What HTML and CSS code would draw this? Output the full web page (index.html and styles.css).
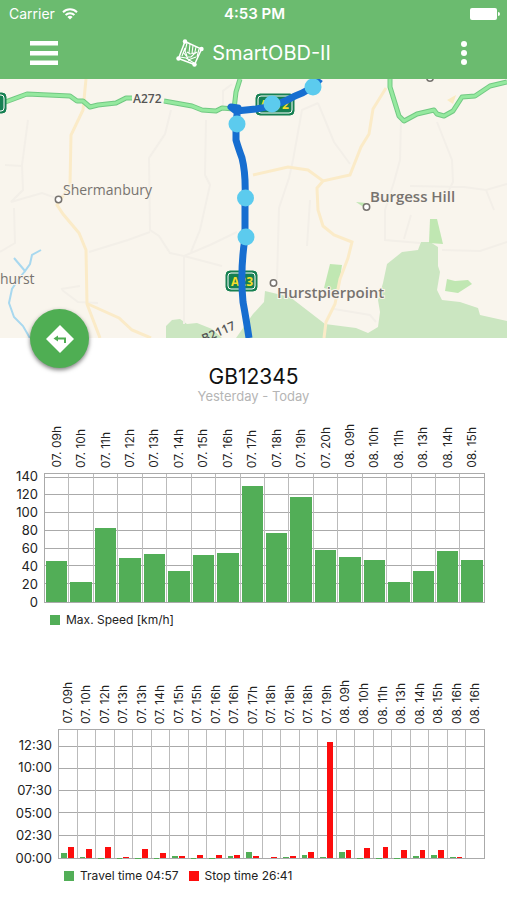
FILE: index.html
```html
<!DOCTYPE html>
<html lang="en">
<head>
  <meta charset="UTF-8">
  <meta name="viewport" content="width=device-width, initial-scale=1.0">
  <title>SmartOBD-II</title>
  <link rel="stylesheet" href="styles.css">
</head>
<body>
  <header class="header">
    <div class="status">
      <div class="carrier">
        <span>Carrier</span>
        <svg width="16" height="12" viewBox="0 0 16 12" fill="none" stroke="#fff" stroke-width="2">
          <path d="M1 4.2a10 10 0 0 1 14 0M3.6 7a6.3 6.3 0 0 1 8.8 0"/>
          <path d="M8 11.6L5.4 9a3.8 3.8 0 0 1 5.2 0z" fill="#fff" stroke="none"/>
        </svg>
      </div>
      <strong class="clock">4:53 PM</strong>
      <div class="battery">
        <svg width="30" height="12" viewBox="0 0 30 12" fill="#fff">
          <rect width="27" height="12" rx="2"/>
          <path d="M28 4q2 0 2 2t-2 2z"/>
        </svg>
      </div>
    </div>
    <div class="toolbar">
      <button class="icon-button" aria-label="Menu">
        <svg width="28" height="24" viewBox="0 0 28 24" fill="#fff">
          <path d="M0 0h28v4.5H0zM0 10h28v4.5H0zM0 19.500h28V24H0z"/>
        </svg>
      </button>
      <h1 class="title">
        <svg width="28" height="28" viewBox="0 0 28 28" fill="none" stroke="#fff">
          <path d="M9 2.500L25.500 10L18.500 25.500L2.500 19.500z" stroke-width="1.500"/>
          <path d="M11 4L9 12l2 5M14 5l-1 9M17 6.500l-1 8M20 8l-1.500 7M23 10l-2 8M9 9l-3 8M7 13l4 5h4l3-3 3-2M11 13l3 2 4-1M4 18l6 1 8 5M11 18l2 4M12 21l8-3" stroke-width="1.100"/>
          <g fill="#fff" stroke="none"><circle cx="9" cy="2.500" r="2.200"/><circle cx="25.500" cy="10" r="2.200"/><circle cx="18.500" cy="25.500" r="2.200"/><circle cx="2.500" cy="19.500" r="2.200"/></g>
        </svg>
        <span>SmartOBD-II</span>
      </h1>
      <button class="icon-button more" aria-label="More">
        <svg width="6" height="24" viewBox="0 0 6 24" fill="#fff">
          <circle cx="3" cy="3" r="3"/><circle cx="3" cy="12" r="3"/><circle cx="3" cy="21" r="3"/>
        </svg>
      </button>
    </div>
  </header>

  <section class="map">
    <svg class="map-canvas" viewBox="0 79 507 259" preserveAspectRatio="xMidYMid slice">
      <rect y="79" width="507" height="259" fill="#f9f5ed"/>

      <!-- woods -->
      <g fill="#cbe6c1">
        <path d="M166 338V326L172 320L180 319L187 324L197 323L212 329L222 338z"/>
        <path d="M236 338L253 314L264 302L265 291L290 297L325 324L356 328L368 333L378 327L380 312L378 300L383 283L387 264L402 252L418 250L421 242L430 242L438 247L438 266L440 272L437 290L442 300L460 302L478 308L480 315L507 321V338z"/>
      </g>
      <g fill="#c0e7b2">
        <path d="M430 219L437 219L443 244L429 243z"/>
        <path d="M330 264L342 265L338 292L324 288z"/>
        <path d="M447 279L455 281L468 280L472 284L458 293L445 291z"/>
        <path d="M356 202L366 203L365 208z"/>
      </g>

      <!-- lanes -->
      <g fill="none" stroke="#f3efe8" stroke-width="2">
        <path d="M28 120L22 165L23 190L11 202L42 193L56 198M5 165L22 166"/>
        <path d="M171 110L165 134L149 158L150 230L159 236L170 253L184 256L184 324M89 252L128 240L150 232M184 256L210 245L237 232M184 256L222 266M206 120L205 175L210 185L200 230L191 252M223 110V91L232 84"/>
        <path d="M318 103L302 110L293 160L289 178L279 208L277 280M318 103L334 142L350 164M401 120L400 160L394 182L385 210L385 240L420 243M437 122L452 160L453 182L449 190M410 186L464 187L486 190L507 184M486 190L494 210M442 250L480 251L507 242M404 239L411 215"/>
        <path d="M61 289L80 286M62 290L78 302L98 303M14 208L15 243L0 252M334 309L370 315L376 322M310 200L307 246"/>
      </g>

      <!-- minor roads -->
      <g fill="none" stroke="#fbebc8" stroke-width="3">
        <path d="M86 79L83 110L71 135L70 185L57 205L63 214L79 233L86 250L87 304L100 338M88 304L119 318L132 330L151 338"/>
        <path d="M253 175L288 167L308 170L323 181L350 175L361 147L369 134L373 109L386 88M323 181L317 188L318 210L323 226L334 235L352 242L348 258L340 279L335 304L326 322L324 338"/>
      </g>
      <path d="M447 100L456 95L453 104z" fill="#fbebc2"/>

      <!-- stream -->
      <path d="M41 250L32 255L30 264L25 271L14 258M25 271L18 280L12 289L9 303L14 317L23 326L31 340" fill="none" stroke="#a8d8ef" stroke-width="2"/>

      <!-- A roads -->
      <g fill="none" stroke-linejoin="round">
        <g stroke="#72c983" stroke-width="5">
          <path d="M0 104L27 94L70 96L77 101L83 101L90 107L98 105L116 103L126 98L132 98M164 101L192 106L202 110L216 111L222 108L234 109L236 92L240 79"/>
          <path d="M390 79V87L399 116L404 121L417 114L434 110L437 114L444 116L453 111L462 97L475 96L490 86L507 82"/>
        </g>
        <g stroke="#95e99f" stroke-width="3">
          <path d="M0 104L27 94L70 96L77 101L83 101L90 107L98 105L116 103L126 98L132 98M164 101L192 106L202 110L216 111L222 108L234 109L236 92L240 79"/>
          <path d="M390 79V87L399 116L404 121L417 114L434 110L437 114L444 116L453 111L462 97L475 96L490 86L507 82"/>
        </g>
      </g>

      <!-- road shields -->
      <g fill="#168052" stroke="#fff">
        <rect x="-20" y="93" width="26" height="20" rx="4" stroke="#168052"/>
        <rect x="-20" y="95" width="24" height="16" rx="3"/>
        <rect x="256" y="94" width="38" height="21" rx="4" stroke="#168052"/>
        <rect x="258" y="96" width="34" height="17" rx="3"/>
        <rect x="226" y="271" width="31" height="20" rx="4" stroke="#168052"/>
        <rect x="228" y="273" width="27" height="16" rx="3"/>
      </g>
      <text class="shield" x="260" y="109">A272</text>
      <text class="shield" x="231" y="286">A23</text>

      <text class="road" x="133" y="103">A272</text>
      <text class="road" transform="translate(204 343) rotate(-24)">B2117</text>

      <!-- towns -->
      <g class="town">
        <text x="63" y="195">Shermanbury</text>
        <text x="0" y="284">hurst</text>
      </g>
      <g class="town town-big">
        <text x="370" y="202">Burgess Hill</text>
        <text x="277" y="298">Hurstpierpoint</text>
      </g>
      <g fill="#fff" stroke="#77736f" stroke-width="1.500">
        <circle cx="58.500" cy="199.500" r="3.200"/>
        <circle cx="366.500" cy="207" r="3.200"/>
        <circle cx="273.500" cy="283" r="3.200"/>
        <circle cx="430" cy="78" r="3.200"/>
      </g>

      <!-- driven route -->
      <path d="M320 79Q312 90 295 96Q278 106 256 109L236 111L231 107L238 108L236 122V140Q238 147 242 158Q246 174 245 198V238Q240 270 243 302Q246 318 249 338" fill="none" stroke="#176ed0" stroke-width="7" stroke-linejoin="round"/>
      <g fill="#5ccbee">
        <circle cx="313" cy="87" r="8.500"/>
        <circle cx="272" cy="104" r="8.500"/>
        <circle cx="237" cy="124" r="8.500"/>
        <circle cx="245.500" cy="198" r="8.500"/>
        <circle cx="246" cy="237" r="8.500"/>
      </g>
    </svg>
    <button class="fab" aria-label="Directions">
      <svg width="28" height="28" viewBox="0 0 28 28">
        <path d="M14 0L28 14L14 28L0 14z" fill="#fff"/>
        <path d="M7.500 13.500L12 10.500v2h8V18h-2v-3.500h-6v2z" fill="#4fae53"/>
      </svg>
    </button>
  </section>

  <main class="report">
    <h2 class="plate">GB12345</h2>
    <p class="period">Yesterday - Today</p>

    <section class="chart speed" id="speed">
      <div class="axis"></div>
      <div class="plot">
        <div class="lines"></div>
        <div class="columns"></div>
      </div>
      <div class="legend">
        <div class="legend-item"><span class="key green"></span>Max. Speed [km/h]</div>
      </div>
    </section>

    <section class="chart times" id="times">
      <div class="axis"></div>
      <div class="plot">
        <div class="lines"></div>
        <div class="columns"></div>
      </div>
      <div class="legend">
        <div class="legend-item"><span class="key green"></span>Travel time 04:57</div>
        <div class="legend-item"><span class="key red"></span>Stop time 26:41</div>
      </div>
    </section>
  </main>

  <script src="charts.js"></script>
</body>
</html>
```

FILE: styles.css
```css
* {
  box-sizing: border-box;
}
body {
  margin: 0;
  background: #fff;
  color: #222;
  font-family: Inter, "Liberation Sans", sans-serif;
}
button {
  border: none;
  padding: 0;
  background: none;
  cursor: pointer;
}
svg {
  display: block;
}

/* header */
.header {
  height: 79px;
  background: #6bbb6f;
  color: #fff;
}
.status {
  display: grid;
  grid-template-columns: 1fr auto 1fr;
  align-items: center;
  height: 27px;
  padding: 0 7px 0 9px;
  font-size: 14px;
}
.carrier {
  display: flex;
  align-items: center;
  gap: 7px;
}
.clock {
  font-size: 15px;
  font-weight: 600;
}
.battery {
  justify-self: end;
}
.toolbar {
  display: flex;
  align-items: center;
  justify-content: space-between;
  height: 52px;
  padding: 0 40px 0 30px;
}
.more {
  display: flex;
  justify-content: flex-end;
  width: 18px;
}
.title {
  display: flex;
  align-items: center;
  gap: 8px;
  margin: 0;
  font-size: 20px;
  font-weight: 400;
}

/* map */
.map {
  position: relative;
}
.map-canvas {
  width: 100%;
  height: 259px;
}
.town {
  font-family: "Open Sans", sans-serif;
  font-size: 14px;
  fill: #77736f;
  stroke: #f9f5ed;
  stroke-width: 2px;
  paint-order: stroke;
}
.town-big {
  font-size: 15px;
  font-weight: 600;
}
.road {
  font-family: "Open Sans", sans-serif;
  font-size: 12px;
  font-weight: 600;
  fill: #555;
}
.shield {
  font-family: "Open Sans", sans-serif;
  font-size: 12px;
  font-weight: 700;
  fill: #f4dd2c;
}
.fab {
  position: absolute;
  left: 30px;
  bottom: -30px;
  display: flex;
  align-items: center;
  justify-content: center;
  width: 59px;
  height: 59px;
  border-radius: 50%;
  background: #4fae53;
  box-shadow: 0 2px 4px rgba(0, 0, 0, 0.5);
}

/* report */
.report {
  padding: 26px 22px 16px 0;
}
.plate {
  margin: 0 0 0 22px;
  text-align: center;
  font-size: 21px;
  font-weight: 400;
  line-height: 26px;
  color: #111;
}
.period {
  margin: 0 0 0 22px;
  text-align: center;
  font-size: 13px;
  line-height: 13px;
  color: #b5b5b5;
}

/* charts */
.chart {
  display: grid;
  grid-template-columns: 44px 1fr;
  font-size: 12px;
}
.speed {
  margin-top: 70px;
}
.times {
  grid-template-columns: 58px 1fr;
  margin-top: 101px;
}
.axis {
  display: flex;
  flex-direction: column-reverse;
  height: 130px;
  padding-right: 6px;
  font-size: 13px;
}
.tick {
  display: flex;
  flex-shrink: 0;
  align-items: flex-end;
  justify-content: flex-end;
}
.tick span {
  line-height: 16px;
  margin-bottom: -7px;
}
.plot {
  position: relative;
  height: 130px;
  border: 1px solid #aaa;
}
.lines {
  position: absolute;
  inset: 0;
  display: flex;
  flex-direction: column-reverse;
}
.line {
  flex-shrink: 0;
  border-bottom: 1px solid #aaa;
}
.line:first-child {
  border-bottom: none;
}
.columns {
  position: relative;
  display: flex;
  height: 100%;
}
.column {
  position: relative;
  display: flex;
  flex: 1;
  align-items: flex-end;
  gap: 1px;
  padding: 0 1px;
}
.column + .column {
  border-left: 1px solid #bbb;
}
.times .column {
  padding: 0 3px 0 2px;
}
.column-label {
  position: absolute;
  left: 50%;
  bottom: 100%;
  margin-bottom: 6px;
  line-height: 16px;
  white-space: nowrap;
  writing-mode: vertical-rl;
  transform: translateX(-50%) rotate(180deg);
}
.bar {
  flex: 1;
}
.green {
  background: #52ae57;
}
.red {
  background: #fd0d0d;
}
.legend {
  grid-column: 2;
  display: flex;
  gap: 10px;
  margin-top: 9px;
  padding-left: 6px;
  line-height: 16px;
}
.legend-item {
  display: flex;
  align-items: center;
  gap: 6px;
}
.key {
  width: 10px;
  height: 10px;
}
```

FILE: charts.js
```javascript
const speed = {
  max: 144,
  step: 20,
  ticks: ["0", "20", "40", "60", "80", "100", "120", "140"],
  colors: ["green"],
  rows: [
    ["07. 09h", 46], ["07. 10h", 23], ["07. 11h", 83], ["07. 12h", 50],
    ["07. 13h", 54], ["07. 14h", 35], ["07. 15h", 53], ["07. 16h", 55],
    ["07. 17h", 131], ["07. 18h", 78], ["07. 19h", 118], ["07. 20h", 59],
    ["08. 09h", 51], ["08. 10h", 47], ["08. 11h", 22], ["08. 13h", 35],
    ["08. 14h", 57], ["08. 15h", 47]
  ]
};

// travel and stop time in minutes
const times = {
  max: 861,
  step: 150,
  ticks: ["00:00", "02:30", "05:00", "07:30", "10:00", "12:30"],
  colors: ["green", "red"],
  rows: [
    ["07. 09h", 36, 72], ["07. 10h", 10, 58], ["07. 12h", 3, 76],
    ["07. 13h", 3, 4], ["07. 13h", 3, 60], ["07. 14h", 2, 36],
    ["07. 15h", 14, 14], ["07. 15h", 3, 20], ["07. 16h", 3, 20],
    ["07. 16h", 16, 22], ["07. 17h", 42, 15], ["07. 18h", 0, 7],
    ["07. 18h", 10, 12], ["07. 18h", 22, 38], ["07. 19h", 10, 782],
    ["08. 09h", 40, 54], ["08. 10h", 3, 66], ["08. 11h", 3, 72],
    ["08. 13h", 3, 56], ["08. 14h", 12, 56], ["08. 15h", 18, 54],
    ["08. 16h", 10, 4], ["08. 16h", 0, 0]
  ]
};

function drawChart(id, chart) {
  const root = document.getElementById(id);
  const percent = (value) => (value / chart.max * 100) + "%";
  const step = percent(chart.step);

  root.querySelector(".axis").innerHTML = chart.ticks.map((text) =>
    `<div class="tick" style="height:${step}"><span>${text}</span></div>`).join("");
  root.querySelector(".lines").innerHTML = chart.ticks.map(() =>
    `<div class="line" style="height:${step}"></div>`).join("");

  root.querySelector(".columns").innerHTML = chart.rows.map(([label, ...values]) => {
    const bars = values.map((value, i) =>
      `<div class="bar ${chart.colors[i]}" style="height:${percent(value)}"></div>`).join("");
    return `<div class="column"><span class="column-label">${label}</span>${bars}</div>`;
  }).join("");
}

drawChart("speed", speed);
drawChart("times", times);
```
